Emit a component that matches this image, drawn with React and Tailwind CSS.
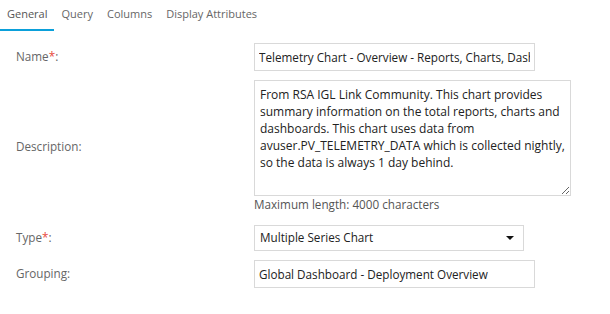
import React from 'react'

const tabs = ['General', 'Query', 'Columns', 'Display Attributes']

const description =
  'From RSA IGL Link Community. This chart provides\nsummary information on the total reports, charts and\ndashboards. This chart uses data from\navuser.PV_TELEMETRY_DATA which is collected nightly,\nso the data is always 1 day behind.'

function Label({ children, required }) {
  return (
    <div className="w-[254px] shrink-0 pl-4 text-[11.7px] text-[#666]">
      {children}
      {required && <span className="text-[#e8473c]">*</span>}:
    </div>
  )
}

export default function App() {
  return (
    <div className="w-[610px] h-[314px] bg-white overflow-hidden font-['Open_Sans',sans-serif]">
      {/* tabs */}
      <div className="flex h-[31px] items-stretch">
        {tabs.map((t, i) => (
          <div
            key={t}
            className={`relative flex items-center px-[7px] text-[11px] ${i === 0 ? 'text-[#555]' : 'text-[#666]'} pb-[2px]`}
          >
            {t}
            {i === 0 && <div className="absolute left-0 right-0 bottom-0 h-[2px] bg-[#0ba0da]"></div>}
          </div>
        ))}
      </div>

      <div className="mt-[12px] flex flex-col">
        <div className="flex items-center">
          <Label required>Name</Label>
          <input
            readOnly
            defaultValue="Telemetry Chart - Overview - Reports, Charts, Dashboards"
            className="w-[281px] h-[28px] border border-[#d9d9d9] px-[4px] text-[11.7px] text-[#222] outline-none"
          />
        </div>

        <div className="mt-[9px] flex items-center">
          <Label>Description</Label>
          <div className="flex flex-col">
            <textarea
              readOnly
              defaultValue={description}
              className="w-[317px] h-[116px] border border-[#d9d9d9] px-[5px] py-[5px] text-[12px] leading-[17px] text-[#222] outline-none"
            />
            <div className="text-[11.7px] leading-[17px] text-[#555]">Maximum length: 4000 characters</div>
          </div>
        </div>

        <div className="mt-[12px] flex items-center">
          <Label required>Type</Label>
          <div className="w-[270px] h-[26px] border border-[#d9d9d9] flex items-center justify-between pl-[5px] pr-[9px] text-[11.7px] text-[#222]">
            <span>Multiple Series Chart</span>
            <svg width="8" height="4" viewBox="0 0 8 4">
              <path d="M0 0h8L4 4z" fill="#111" />
            </svg>
          </div>
        </div>

        <div className="mt-[9px] flex items-center">
          <Label>Grouping</Label>
          <input
            readOnly
            defaultValue="Global Dashboard - Deployment Overview"
            className="w-[281px] h-[28px] border border-[#d9d9d9] px-[4px] text-[11.7px] text-[#222] outline-none"
          />
        </div>
      </div>
    </div>
  )
}
